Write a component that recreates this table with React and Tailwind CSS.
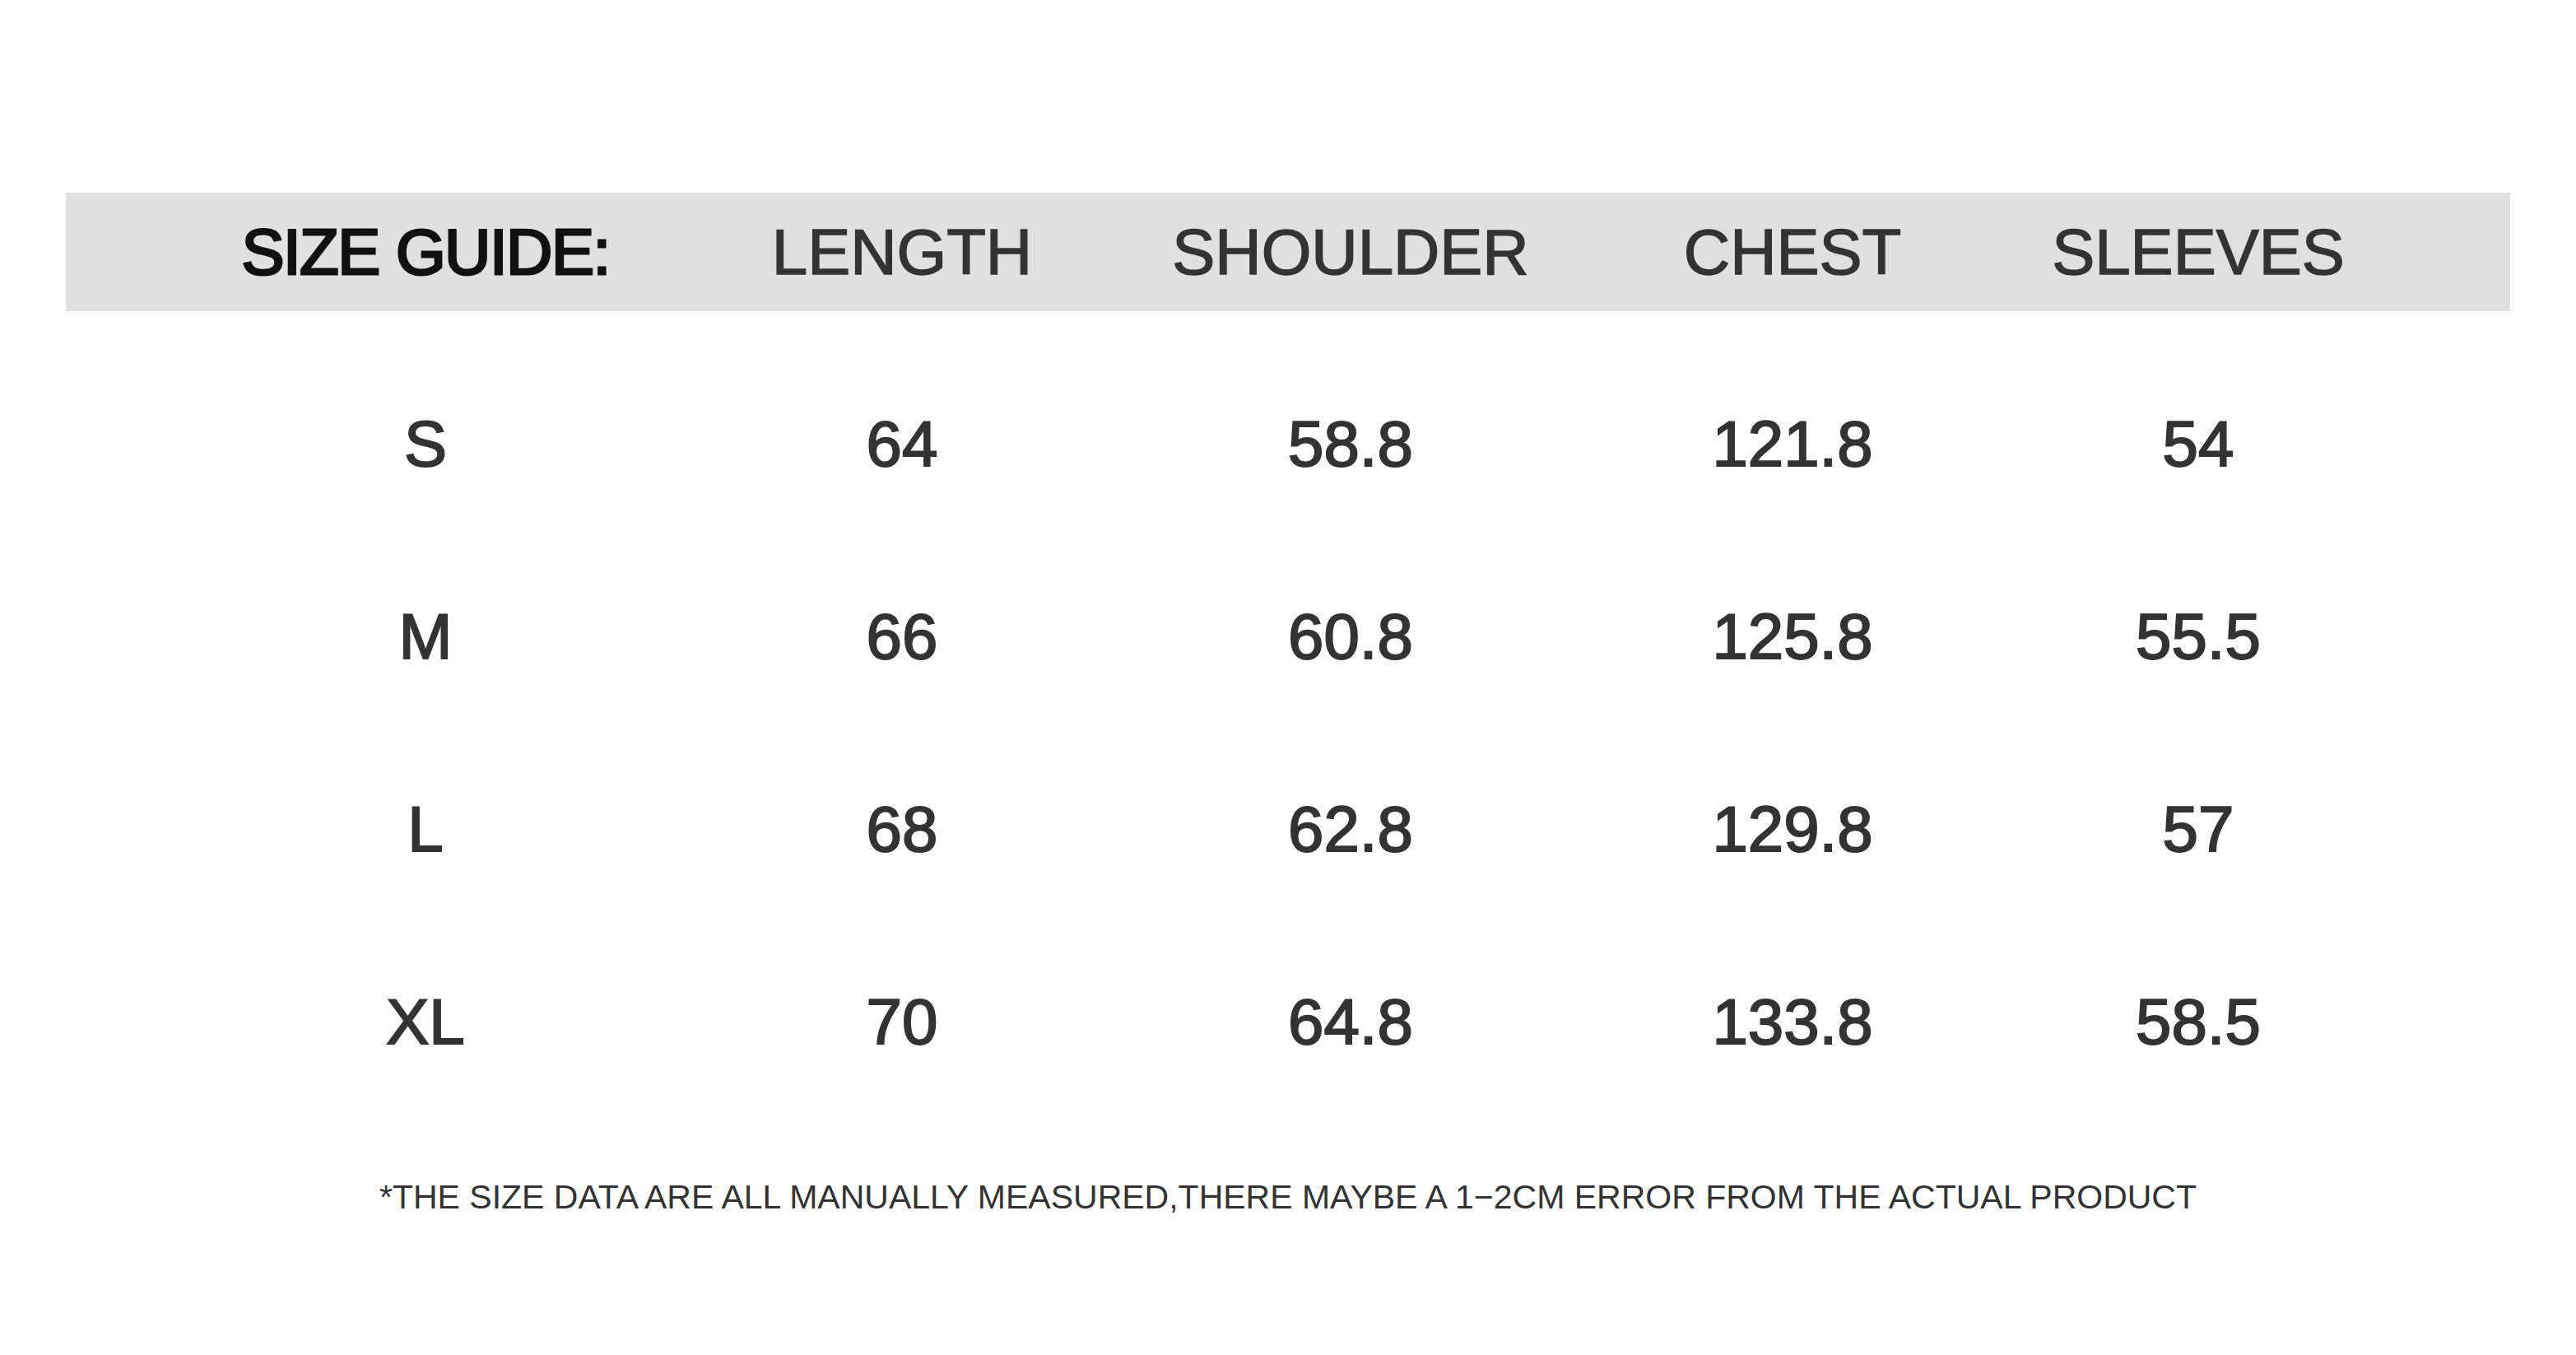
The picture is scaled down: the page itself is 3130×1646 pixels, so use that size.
export default function App() {
  const rows = [
    ["S", "64", "58.8", "121.8", "54"],
    ["M", "66", "60.8", "125.8", "55.5"],
    ["L", "68", "62.8", "129.8", "57"],
    ["XL", "70", "64.8", "133.8", "58.5"],
  ];
  const cell = "w-[460px] flex justify-center whitespace-nowrap";
  const Row = ({ items, first }) => (
    <div className="flex items-center pl-[207px] h-full">
      <div className={cell}>{first ?? items[0]}</div>
      <div className={`${cell} ml-[119px]`}>{items[1]}</div>
      <div className={`${cell} ml-[85px]`}>{items[2]}</div>
      <div className={`${cell} ml-[77px]`}>{items[3]}</div>
      <div className={`${cell} ml-[33px]`}>{items[4]}</div>
    </div>
  );
  return (
    <div
      className="w-[3130px] h-[1646px] bg-white pt-[234px] overflow-hidden"
      style={{ fontFamily: '"Liberation Sans", Arial, sans-serif' }}
    >
      <div className="ml-[80px] w-[2970px] h-[144px] bg-[#e0e0e0] text-[78px] leading-none text-[#333333] [-webkit-text-stroke:1.5px_#333333]">
        <Row
          items={["", "LENGTH", "SHOULDER", "CHEST", "SLEEVES"]}
          first={
            <span className="text-[#111111] tracking-[-1.5px] [-webkit-text-stroke:3px_#111111]">
              SIZE GUIDE:
            </span>
          }
        />
      </div>
      <div className="ml-[80px] w-[2970px] mt-[44px] text-[78px] leading-none text-[#333333] [-webkit-text-stroke:2px_#333333]">
        {rows.map((r) => (
          <div key={r[0]} className="h-[234px]">
            <Row items={r} />
          </div>
        ))}
      </div>
      <div className="mt-[76px] text-center text-[41px] leading-none text-[#333333] whitespace-nowrap">
        *THE SIZE DATA ARE ALL MANUALLY MEASURED,THERE MAYBE A 1−2CM ERROR FROM THE ACTUAL PRODUCT
      </div>
    </div>
  );
}
